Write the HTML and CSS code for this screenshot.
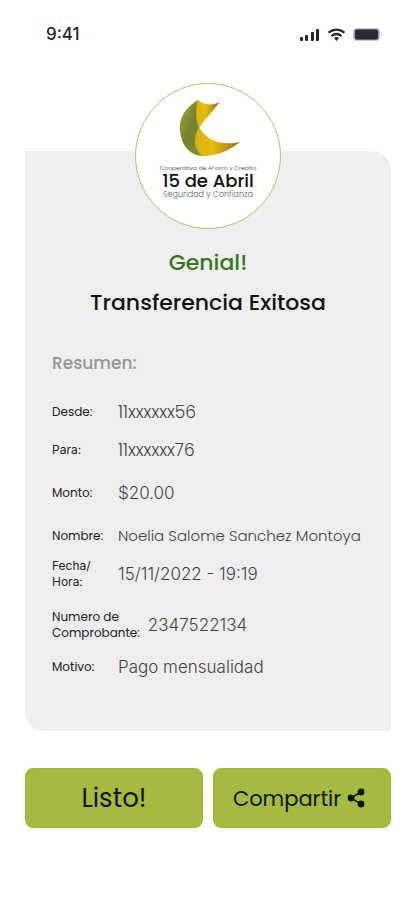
FILE: index.html
```html
<!DOCTYPE html>
<html lang="es">
<head>
<meta charset="utf-8">
<meta name="viewport" content="width=device-width, initial-scale=1">
<title>Transferencia Exitosa</title>
<link rel="stylesheet" href="styles.css">
</head>
<body>
<header class="status">
  <span class="time">9:41</span>
  <svg class="status-icons" width="84" height="20" viewBox="0 0 84 20" aria-hidden="true">
    <g fill="#25252a">
      <rect x="1" y="13" width="3" height="4" rx="1"/>
      <rect x="6" y="11" width="3" height="6" rx="1"/>
      <rect x="12" y="8" width="3" height="9" rx="1"/>
      <rect x="17" y="5" width="3" height="12" rx="1"/>
    </g>
    <g fill="none" stroke="#25252a" stroke-width="2.2">
      <path d="M29.5 8.7 Q37.5 2.5 45.500 8.700"/>
      <path d="M32.400 12 Q37.500 8 42.600 12"/>
    </g>
    <path d="M35 14 Q37.500 12 40 14 L37.500 17 Z" fill="#25252a"/>
    <rect x="54.500" y="4.500" width="26" height="12" rx="3" fill="#9a9ba3" stroke="#c8c8cd"/>
    <rect x="56" y="5.500" width="23" height="10" rx="2" fill="#292b35"/>
    <path d="M82 8.500 Q84 10.500 82 12.500 Z" fill="#c8c8cd"/>
  </svg>
</header>
<main class="screen">
  <section class="card">
    <div class="logo">
      <svg class="mark" width="64" height="60" viewBox="0 0 64 60" aria-hidden="true">
        <defs>
          <linearGradient id="green" x1="0" y1="0" x2="1" y2="1">
            <stop offset="0" stop-color="#a3ab35"/><stop offset=".5" stop-color="#74802e"/><stop offset="1" stop-color="#8a982e"/>
          </linearGradient>
          <linearGradient id="gold" x1="0" y1="0" x2="1" y2="0">
            <stop offset="0" stop-color="#dcb312"/><stop offset=".4" stop-color="#e5bd0c"/><stop offset="1" stop-color="#9b6a16"/>
          </linearGradient>
        </defs>
        <path d="M22 1 C10 8 3 18 4 31 C5 46 14 57 27 57 L25 45 L23 29 L23 10 Z" fill="url(#green)"/>
        <path d="M22 1 C28 6 36 7 44 3 C37 12 29 20 23 29 C20 21 19 11 22 1 Z" fill="url(#gold)"/>
        <path d="M23 28 C31 42 45 47 64 43 C53 52 40 57 27 57 C19 51 16 42 23 28 Z" fill="url(#gold)"/>
      </svg>
      <span class="logo-small">Cooperativa de Ahorro y Credito</span>
      <strong class="logo-name">15 de Abril</strong>
      <span class="logo-tag">Seguridad y Confianza</span>
    </div>
    <p class="cheer">Genial!</p>
    <h1 class="title">Transferencia Exitosa</h1>
    <h2 class="subtitle">Resumen:</h2>
    <dl class="details">
      <div class="row"><dt>Desde:</dt><dd>11xxxxxx56</dd></div>
      <div class="row"><dt class="plain">Para:</dt><dd>11xxxxxx76</dd></div>
      <div class="row row-amount"><dt>Monto:</dt><dd class="plain">$20.00</dd></div>
      <div class="row"><dt>Nombre:</dt><dd class="name">Noelia Salome Sanchez Montoya</dd></div>
      <div class="row"><dt class="plain">Fecha/<br>Hora:</dt><dd class="plain">15/11/2022 - 19:19</dd></div>
      <div class="row row-receipt"><dt>Numero de<br>Comprobante:</dt><dd class="plain">2347522134</dd></div>
      <div class="row row-last"><dt>Motivo:</dt><dd class="plain">Pago mensualidad</dd></div>
    </dl>
  </section>
  <div class="actions">
    <button class="btn btn-done" type="button">Listo!</button>
    <button class="btn btn-share" type="button">Compartir
      <svg width="18" height="20" viewBox="0 0 18 20" aria-hidden="true">
        <path d="M14 4 L4 10 L14 16" fill="none" stroke="#11160a" stroke-width="1.500"/>
        <circle cx="14" cy="4" r="3.400" fill="#11160a"/><circle cx="4" cy="10" r="3.400" fill="#11160a"/><circle cx="14" cy="16" r="3.400" fill="#11160a"/>
      </svg>
    </button>
  </div>
</main>
</body>
</html>
```
FILE: styles.css
```css
* { box-sizing: border-box; }
body {
  margin: 0;
  background: #fff;
  color: #111;
  font-family: Poppins, Inter, sans-serif;
}
.status {
  display: flex;
  align-items: center;
  justify-content: space-between;
  height: 68px;
  padding: 0 32px 0 46px;
}
.time { font-family: Inter, sans-serif; font-size: 17px; font-weight: 500; color: #25252a; }
.screen { padding: 83px 24px 0 25px; }
.card {
  display: flex;
  flex-direction: column;
  padding: 0 27px 54px;
  background: #efefef;
  border-radius: 0 20px 0 20px;
}
.logo {
  display: flex;
  flex-direction: column;
  align-items: center;
  align-self: center;
  width: 146px;
  height: 146px;
  margin-top: -68px;
  padding-top: 15px;
  background: #fff;
  border: 1px solid #b3c26a;
  border-radius: 50%;
  white-space: nowrap;
}
.logo-small { margin-top: 5px; font-size: 6px; line-height: 8px; font-weight: 300; color: #333; }
.logo-name { font-size: 18px; line-height: 18px; font-weight: 500; color: #111; }
.logo-tag { font-size: 8px; line-height: 10px; font-weight: 300; color: #48705c; }
.cheer, .title, .subtitle { margin: 0; font-weight: 500; }
.cheer {
  margin-top: 18px;
  text-align: center;
  font-size: 22px;
  line-height: 32px;
  color: #38761d;
}
.title {
  margin-top: 8px;
  text-align: center;
  font-size: 22px;
  line-height: 32px;
  white-space: nowrap;
}
.subtitle { margin-top: 32px; font-size: 17px; line-height: 24px; color: #959595; }
.details { margin: 18px 0 0; }
.row {
  display: flex;
  align-items: center;
  gap: 8px;
  min-height: 38px;
}
.row-amount { min-height: 48px; }
.row-receipt { min-height: 64px; }
.row-last { min-height: 20px; }
dt { min-width: 58px; font-size: 12px; line-height: 16px; color: #222; }
dd { margin: 0; font-size: 17px; line-height: 20px; font-weight: 300; color: #444; white-space: nowrap; }
.name { font-size: 15px; }
.plain { font-family: Inter, sans-serif; }
.actions {
  display: grid;
  grid-template-columns: 1fr 1fr;
  gap: 10px;
  margin-top: 37px;
}
.btn {
  display: flex;
  align-items: center;
  justify-content: center;
  gap: 6px;
  height: 60px;
  padding: 0;
  border: 1px solid #9fb829;
  border-radius: 8px;
  background: #a5ba40;
  color: #11160a;
  font-family: inherit;
}
.btn-done { font-size: 26px; }
.btn-share { font-size: 21px; padding-right: 6px; }
```
